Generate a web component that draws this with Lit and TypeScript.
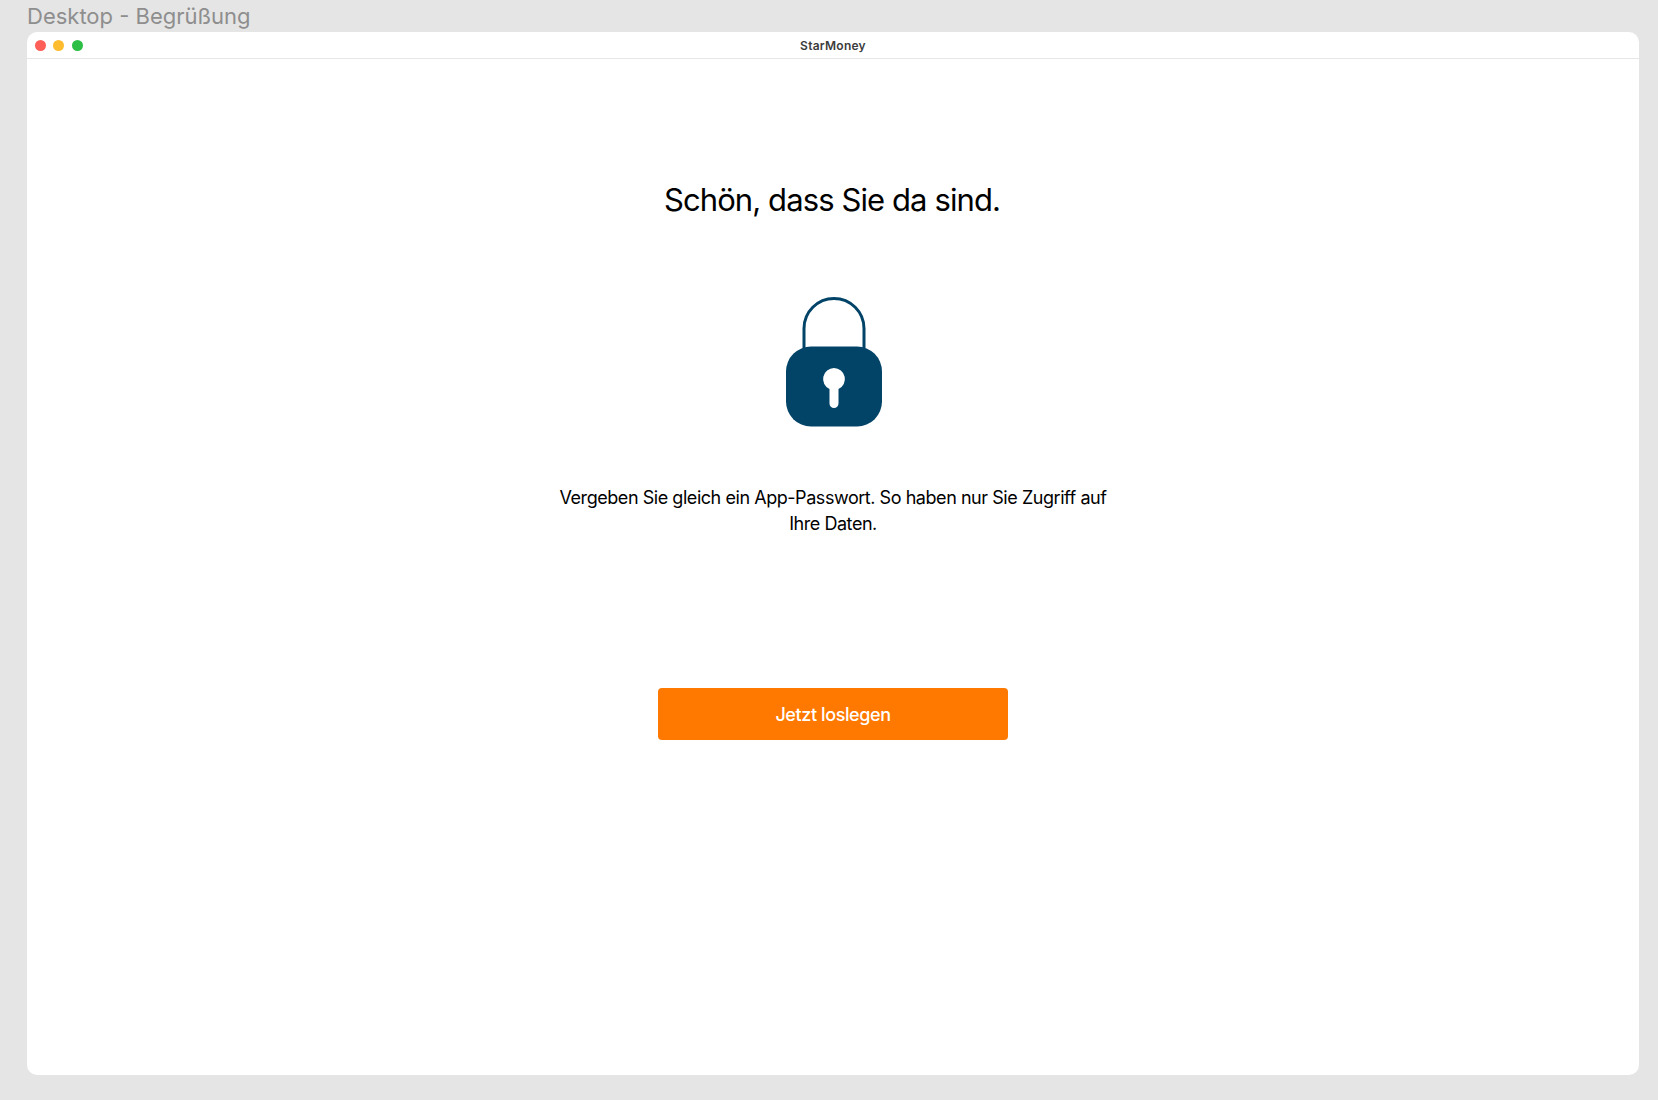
import { LitElement, html, css } from 'lit';
import { customElement } from 'lit/decorators.js';

@customElement('app-root')
export class AppRoot extends LitElement {
  static styles = css`
    :host {
      display: block;
      height: 1100px;
      box-sizing: border-box;
      padding: 0 19px 25px 27px;
      background: #e5e5e5;
      font-family: Inter, 'Liberation Sans', sans-serif;
      color: #000;
    }
    .frame {
      display: flex;
      flex-direction: column;
      height: 100%;
    }
    .label {
      height: 32px;
      line-height: 32px;
      font-size: 22px;
      color: #8e8e8e;
      white-space: nowrap;
    }
    .window {
      flex: 1;
      display: flex;
      flex-direction: column;
      background: #fff;
      border-radius: 10px;
      overflow: hidden;
    }
    .titlebar {
      height: 26px;
      flex: none;
      display: grid;
      grid-template-columns: 1fr auto 1fr;
      align-items: center;
      border-bottom: 1px solid #e6e6e6;
    }
    .dots {
      display: flex;
      gap: 7.7px;
      padding-left: 7.5px;
    }
    .dot {
      width: 11px;
      height: 11px;
      border-radius: 50%;
    }
    .red { background: #ff5f57; }
    .yellow { background: #febc2e; }
    .green { background: #2dbe45; }
    .name {
      font-size: 12px;
      font-weight: 600;
      letter-spacing: 0.25px;
      color: #3c3c3c;
    }
    main {
      display: flex;
      flex-direction: column;
      align-items: center;
      padding-top: 121px;
    }
    h1 {
      margin: 0 2px 0 0;
      font-size: 31px;
      line-height: 40px;
      font-weight: 400;
      letter-spacing: -0.9px;
    }
    svg {
      display: block;
      margin: 77px 0 0 1px;
    }
    p {
      margin: 58px 0 0;
      width: 560px;
      text-align: center;
      font-size: 18px;
      line-height: 26px;
      letter-spacing: -0.45px;
    }
    button {
      margin-top: 151px;
      width: 350px;
      height: 52px;
      border: 0;
      border-radius: 4px;
      background: #ff7900;
      color: #fff;
      font: 500 18px Inter, 'Liberation Sans', sans-serif;
      letter-spacing: -0.4px;
    }
  `;

  render() {
    return html`
      <div class="frame">
        <div class="label">Desktop - Begrüßung</div>
        <div class="window">
          <div class="titlebar">
            <div class="dots">
              <span class="dot red"></span>
              <span class="dot yellow"></span>
              <span class="dot green"></span>
            </div>
            <div class="name">StarMoney</div>
          </div>
          <main>
            <h1>Schön, dass Sie da sind.</h1>
            <svg width="96" height="130" viewBox="0 0 96 130">
              <path d="M18 52V31.5a30 30 0 0 1 60 0V52" fill="none" stroke="#024368" stroke-width="3"/>
              <rect x="0" y="49.5" width="96" height="80" rx="25" fill="#024368"/>
              <path fill="#fff" fill-rule="evenodd" d="M48 71a11 11 0 0 1 4.5 21V106.5a4.5 4.5 0 0 1-9 0V92A11 11 0 0 1 48 71z"/>
            </svg>
            <p>Vergeben Sie gleich ein App-Passwort. So haben nur Sie Zugriff auf Ihre Daten.</p>
            <button>Jetzt loslegen</button>
          </main>
        </div>
      </div>
    `;
  }
}
